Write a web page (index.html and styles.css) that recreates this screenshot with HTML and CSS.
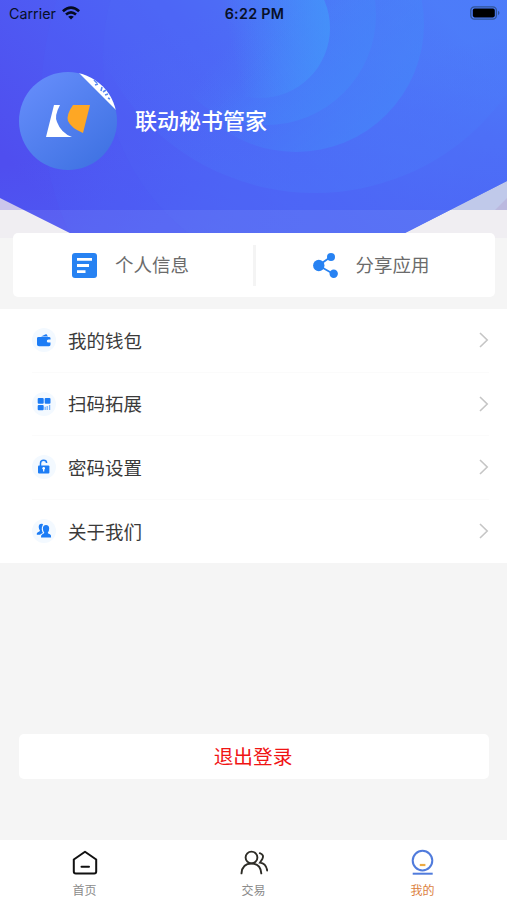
FILE: index.html
```html
<!DOCTYPE html>
<html lang="zh-CN">
<head>
<meta charset="utf-8">
<title>我的</title>
<link rel="stylesheet" href="styles.css">
</head>
<body>
<div class="app">
  <header class="hero">
    <svg class="hero-bg" viewBox="0 0 507 238" aria-hidden="true">
      <defs>
        <linearGradient id="base" gradientUnits="userSpaceOnUse" x1="60" y1="220" x2="380" y2="-60">
          <stop offset="0" stop-color="#4f4eef"/><stop offset=".5" stop-color="#4e64f6"/><stop offset="1" stop-color="#4e7ffa"/>
        </linearGradient>
        <linearGradient id="shade" gradientUnits="userSpaceOnUse" x1="400" y1="60" x2="440" y2="210">
          <stop offset="0" stop-color="#4c66f7" stop-opacity="0"/><stop offset="1" stop-color="#4c66f7" stop-opacity=".75"/>
        </linearGradient>
        <linearGradient id="ring" x1=".3" y1=".3" x2=".9" y2=".8">
          <stop offset=".3" stop-color="#4585f9" stop-opacity="0"/><stop offset="1" stop-color="#4585f9" stop-opacity=".7"/>
        </linearGradient>
        <linearGradient id="core" x1=".1" y1=".6" x2="1" y2=".4">
          <stop offset=".2" stop-color="#4397fa" stop-opacity="0"/><stop offset="1" stop-color="#4397fa" stop-opacity=".75"/>
        </linearGradient>
        <linearGradient id="wide" x1=".4" y1=".3" x2=".7" y2="1">
          <stop offset=".3" stop-color="#4a7bfa" stop-opacity="0"/><stop offset="1" stop-color="#4a7bfa" stop-opacity=".4"/>
        </linearGradient>
        <clipPath id="shape"><path d="M0 0H507V181L405 233L395 238H80L70 233L0 198Z"/></clipPath>
      </defs>
      <path fill="#f0eef2" d="M0 210H507V238H0Z"/>
      <path fill="#cbc6ec" d="M0 190H40V210H0Z"/>
      <path fill="#c0c9ea" d="M440 180H507V210H440Z"/>
      <path fill="#bbb9df" d="M507 198V210H495Z"/>
      <g clip-path="url(#shape)">
        <path fill="url(#base)" d="M0 0H507V238H0Z"/>
        <path fill="url(#shade)" d="M0 0H507V238H0Z"/>
        <circle cx="369" cy="100" r="328" fill="#4c72fa" opacity=".09"/>
        <circle cx="328" cy="57" r="225" fill="#4c78fa" opacity=".1"/>
        <circle cx="315" cy="-42" r="235" fill="url(#wide)"/>
        <circle cx="296" cy="24" r="128" fill="url(#ring)"/>
        <circle cx="266" cy="15" r="110" fill="url(#ring)"/>
        <circle cx="260" cy="28" r="70" fill="url(#core)"/>
        <path fill="#eeeef2" opacity=".075" d="M0 210H507V238H0Z"/>
      </g>
    </svg>
    <div class="status">
      <div class="carrier"><span>Carrier</span>
        <svg width="18" height="14" viewBox="0 0 18 14"><g fill="none" stroke="#050b20" stroke-width="2.6"><path d="M.9 5.2Q9-2.1 17.1 5.2"/><path d="M4 8.5Q9 4.1 14 8.5"/></g><path d="M6.2 10.7Q9 8.6 11.8 10.7L9 13.6Z" fill="#050b20"/></svg>
      </div>
      <time>6:22 PM</time>
      <svg class="battery" width="31" height="14" viewBox="0 0 31 14"><rect x=".8" y=".8" width="25.6" height="12.4" rx="3.6" fill="none" stroke="#315496" stroke-width="1.3"/><rect x="2.8" y="2.6" width="22" height="8.8" rx="1.8" fill="#000"/><path d="M28 4.8Q31 7 28 9.2Z" fill="#315496"/></svg>
    </div>
    <div class="profile">
      <svg class="avatar" width="98" height="98" viewBox="0 0 98 98">
        <defs><linearGradient id="av" x1=".1" y1=".1" x2=".8" y2=".95"><stop stop-color="#648cfa"/><stop offset="1" stop-color="#4073e3"/></linearGradient><clipPath id="round"><circle cx="49" cy="49" r="49"/></clipPath></defs>
        <g clip-path="url(#round)">
          <path fill="url(#av)" d="M0 0H98V98H0Z"/>
          <path fill="#fff" d="M59 0L98 39V0Z"/>
          <path d="M75 8l3 3M76 13l3-1M83 15l-1 4M87 18l-3 2M89 22l-3 1M91 27l-2-1" stroke="#5b8af0" stroke-width="1.6"/>
          <path fill="#fff" d="M35 33H41Q35 44 38 50Q42 61 53 65H27Z"/>
          <path fill="#fea724" d="M54 33H71L64 61Q52 56 49 49Q47 43 54 33Z"/>
        </g>
      </svg>
      <h1>联动秘书管家</h1>
    </div>
  </header>
  <section class="shortcuts">
    <a class="shortcut"><svg width="25" height="25" viewBox="0 0 25 25"><rect width="25" height="25" rx="3" fill="#2782f2"/><path d="M5 6.3H20M5 12.5H17M5 18.7H13.5" stroke="#fff" stroke-width="2.8"/></svg><span>个人信息</span></a>
    <i class="split"></i>
    <a class="shortcut"><svg width="25" height="25" viewBox="0 0 25 25"><path d="M17.5 4L5.5 12.5L20.5 21" fill="none" stroke="#2782f2" stroke-width="1.8"/><g fill="#2782f2"><circle cx="5.8" cy="12.5" r="5.7"/><circle cx="18" cy="4" r="4"/><circle cx="20.7" cy="20.7" r="4.2"/></g></svg><span>分享应用</span></a>
  </section>
  <nav class="menu">
    <a class="row"><svg class="icon" viewBox="0 0 24 24"><circle cx="12" cy="12" r="12" fill="#f3f9ff"/><path fill="#1c7cf5" d="M5 10.2Q5 9 6.5 9H17Q18.5 9 18.5 10.3V11.5H16.5Q14.8 11.5 14.8 13Q14.8 14.5 16.5 14.5H18.5V16.5Q18.5 18.3 17 18.3H7Q5 18.3 5 16.5ZM9 8.5L14.3 6L16 8.5Z"/></svg><span>我的钱包</span><svg class="arrow" viewBox="0 0 10 16"><path d="M1 1L8.2 8L1 15"/></svg></a>
    <a class="row"><svg class="icon" viewBox="0 0 24 24"><circle cx="12" cy="12" r="12" fill="#f3f9ff"/><g fill="#1c7cf5"><rect x="5.7" y="6" width="6" height="5.8" rx="1"/><rect x="12.7" y="6" width="5.8" height="5.8" rx="1"/><rect x="5.7" y="13" width="6" height="5.3" rx="1"/></g><path d="M13.2 14.8V18M15.2 14V18M17.6 13V18" stroke="#74b0fa" stroke-width="1.3"/></svg><span>扫码拓展</span><svg class="arrow" viewBox="0 0 10 16"><path d="M1 1L8.2 8L1 15"/></svg></a>
    <a class="row"><svg class="icon" viewBox="0 0 24 24"><circle cx="12" cy="12" r="12" fill="#f3f9ff"/><path d="M8.5 12V8.2Q8.5 5.3 11.6 5.3Q14.6 5.3 14.6 8" fill="none" stroke="#1c7cf5" stroke-width="1.5"/><rect x="6" y="10.5" width="11.4" height="8" rx="1" fill="#1c7cf5"/><path d="M11.7 13V16.5" stroke="#fff" stroke-width="1.2"/><circle cx="11.7" cy="13.3" r="1.3" fill="#fff"/></svg><span>密码设置</span><svg class="arrow" viewBox="0 0 10 16"><path d="M1 1L8.2 8L1 15"/></svg></a>
    <a class="row"><svg class="icon" viewBox="0 0 24 24"><circle cx="12" cy="12" r="12" fill="#f3f9ff"/><g fill="#1c7cf5"><path d="M11 5Q6.8 4.2 6.7 8Q6.8 10.3 8 11.4Q7.8 12.5 5.8 13.2Q4.4 14 4.8 15.7H8Q9.4 14.5 11 14Q8.7 10 10.6 6.4Z"/><path d="M14 6Q17.2 6 17.2 9.5Q17.2 12 15.8 13.4Q16 14.7 18 15.3Q19.4 16 19.1 18.4H9Q8.7 16 10.3 15.3Q12.2 14.6 12.3 13.4Q10.9 12 10.9 9.5Q10.9 6 14 6Z"/></g></svg><span>关于我们</span><svg class="arrow" viewBox="0 0 10 16"><path d="M1 1L8.2 8L1 15"/></svg></a>
  </nav>
  <button class="logout">退出登录</button>
  <footer class="tabs">
    <a class="tab"><svg viewBox="0 0 28 28"><path d="M2.8 10.5L14 2.7L25.2 10.5V22.5Q25.2 24.5 23.2 24.5H4.8Q2.8 24.5 2.8 22.5ZM10.5 17.7H18" fill="none" stroke="#111" stroke-width="2" stroke-linejoin="round" stroke-linecap="round"/></svg><span>首页</span></a>
    <a class="tab"><svg viewBox="0 0 28 28"><g fill="none" stroke="#2d2c26" stroke-width="1.9" stroke-linecap="round"><circle cx="11.5" cy="8.5" r="5.9"/><path d="M1.5 24.4Q2.2 14.5 11.5 14.5Q20.6 14.5 21.3 24.4M19.8 4.2Q24.5 5.8 22.3 10L20 13.6Q26 14.2 27.2 21.5"/></g></svg><span>交易</span></a>
    <a class="tab active"><svg viewBox="0 0 28 28"><circle cx="13.5" cy="11.6" r="9.8" fill="none" stroke="#507bdc" stroke-width="2"/><path d="M3.7 24.7H23.7" stroke="#507bdc" stroke-width="2"/><path d="M10.8 16H16.4" stroke="#edaa42" stroke-width="2.2"/></svg><span>我的</span></a>
  </footer>
</div>
</body>
</html>
```
FILE: styles.css
```css
* { box-sizing: border-box; }
body { margin: 0; font-family: "Liberation Sans", "Noto Sans CJK SC", sans-serif; }
.app { width: 507px; height: 900px; display: flex; flex-direction: column; background: #f5f5f5; overflow: hidden; }
.hero { position: relative; height: 238px; flex: none; }
.hero-bg { position: absolute; inset: 0; width: 507px; height: 238px; }
.status { position: relative; height: 28px; padding: 0 6px 0 9px; display: grid; grid-template-columns: 1fr auto 1fr; align-items: center; font: 500 14.3px/28px Inter, sans-serif; color: #071027; }
.carrier { display: flex; align-items: center; gap: 6px; font-weight: 400; }
.carrier svg { margin-top: -2px; }
.status time { font-weight: 600; letter-spacing: .3px; margin-right: 1px; }
.battery { justify-self: end; margin-top: -2px; }
.profile { position: relative; display: flex; align-items: center; gap: 18px; margin: 44px 0 0 19px; height: 98px; }
.profile h1 { margin: 2px 0 0; color: #fff; font-size: 22px; line-height: 32px; font-weight: 500; }
.shortcuts { position: relative; flex: none; display: grid; grid-template-columns: 1fr 3px 1fr; align-items: center; height: 64px; margin: -5px 12px 0 13px; border-radius: 5px; background: #fff; }
.shortcut { display: flex; align-items: center; gap: 18px; padding-left: 59px; color: #6b6b6b; font-size: 18.5px; line-height: 28px; }
.shortcut span { margin-top: 2px; }
.shortcut:last-child { padding-left: 57px; }
.split { height: 41px; background: #f4f4f4; }
.menu { flex: none; margin-top: 12px; background: #fff; height: 254px; padding: 0 18px 0 32px; }
.row { display: flex; align-items: center; height: 63.5px; color: #3a3a3a; font-size: 18.5px; border-bottom: 1px solid #fbfbfb; }
.row:last-child { border-bottom: 0; }
.row span { margin: -1px 0 0 12px; }
.icon { width: 24px; height: 24px; }
.arrow { width: 10px; height: 16px; margin-left: auto; fill: none; stroke: #c5c5c5; stroke-width: 1.6; }
.logout { flex: none; margin: 171px 18px 0 19px; height: 45px; padding: 0 2px 2px 0; border: 0; border-radius: 5px; background: #fff; color: #f01414; font: 19.7px/43px "Noto Sans CJK SC", sans-serif; }
.tabs { flex: none; height: 60px; margin-top: auto; display: grid; grid-template-columns: repeat(3, 1fr); background: #fff; }
.tab { display: flex; flex-direction: column; align-items: center; padding-top: 9px; color: #8b8b8b; font-size: 12px; line-height: 18px; }
.tab svg { width: 28px; height: 28px; margin-bottom: 5px; }
.active { color: #db813e; }
```
